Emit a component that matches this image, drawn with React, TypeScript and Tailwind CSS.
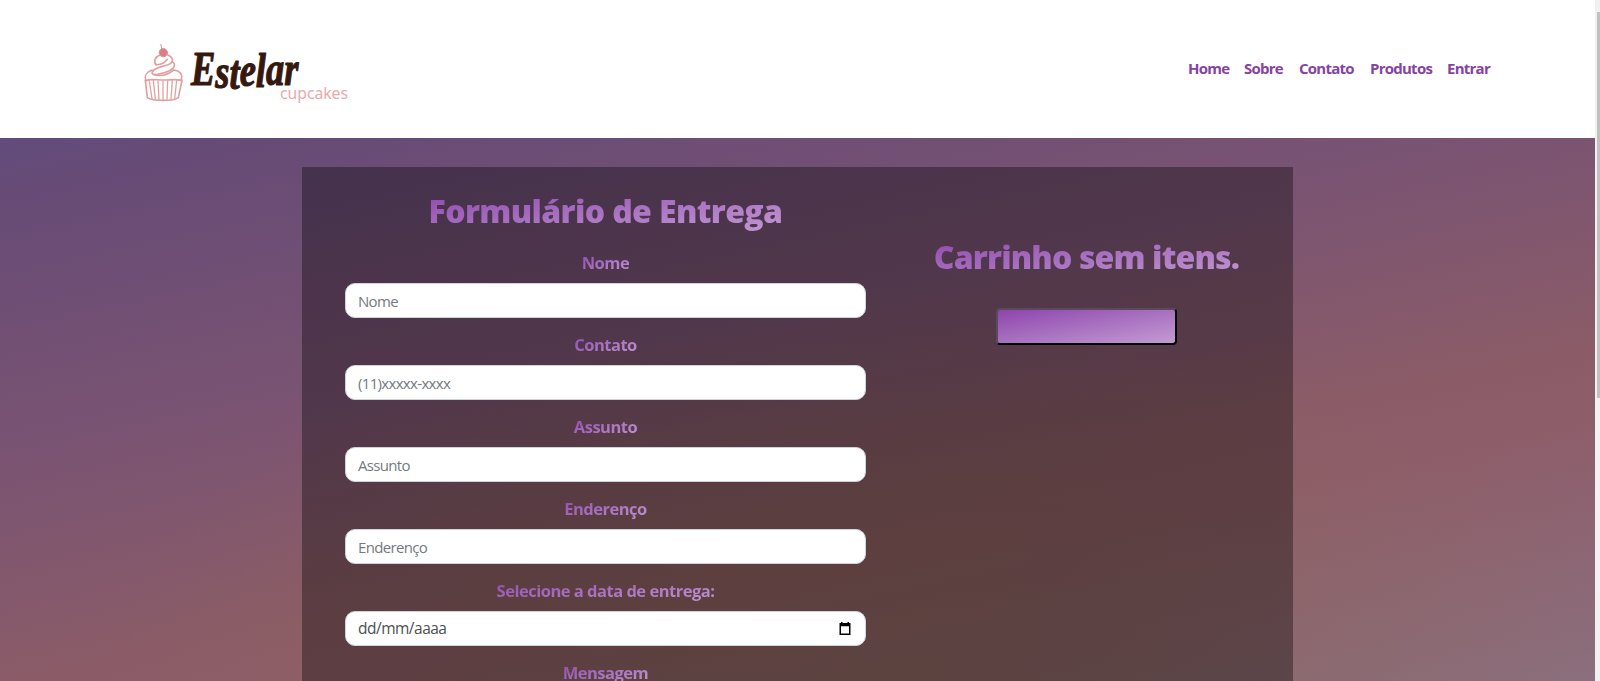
function Logo() {
  return (
    <svg width="240" height="90" viewBox="0 0 240 90" className="block" role="img" aria-label="Estelar cupcakes">
      <g transform="translate(10 10) scale(.3333)" fill="none" stroke="#e0a0a0" strokeWidth="5" strokeLinecap="round" strokeLinejoin="round">
        <path d="M66 26C62 22 66 17 62 14" strokeWidth="3.5" />
        <circle cx="70" cy="38" r="12.5" fill="#d98086" stroke="#dc8d92" strokeWidth="3" />
        <path d="M58 46C44 52 40 66 48 74M82 44C98 50 102 62 92 70C78 80 46 80 38 94" />
        <path d="M48 74C60 75 74 69 82 58M38 94C32 102 42 106 56 102C78 98 100 90 103 78C105 72 101 67 96 66" />
        <path d="M36 90C20 96 12 108 17 122C30 116 50 120 68 120C88 121 106 116 123 121C130 104 120 92 102 90C86 104 62 110 42 104" />
        <path d="M16 122L22 173C38 184 100 184 115 173L126 121" />
        <path d="M28 123L36 176M40 122L46 178M54 123L57 180M69 123L69 180M83 123L81 180M97 122L93 178M110 121L104 176" strokeWidth="3.8" />
      </g>
      <text
        transform="translate(61 0) scale(.76 1)"
        x="0"
        y="55"
        dy="0 3 1 -3 1 -2 0"
        fill="#35190f"
        stroke="#35190f"
        strokeWidth="1.2"
        strokeLinejoin="round"
        fontFamily="'Liberation Serif', serif"
        fontStyle="italic"
        fontWeight="700"
        fontSize="48"
      >
        Estelar
      </text>
      <text x="150" y="69" fill="#e8a9ad" fontFamily="'Noto Sans', sans-serif" fontSize="16.5" textLength="68" lengthAdjust="spacingAndGlyphs">cupcakes</text>
    </svg>
  );
}

const nav = [
  { label: "Home", width: "w-[41px]" },
  { label: "Sobre", width: "w-[40px]" },
  { label: "Contato", width: "w-[56px]" },
  { label: "Produtos", width: "w-[62px]" },
  { label: "Entrar", width: "w-[43px]" },
];

const gradientText = "bg-linear-to-br from-[#8e44ad] to-[#c39bd3] bg-clip-text text-transparent";

function Field({ label, placeholder, date = false }: { label: string; placeholder: string; date?: boolean }) {
  return (
    <div className="mb-3 flex flex-col items-center">
      <label className={`mb-[6px] h-[29px] pt-px text-[16.5px] leading-7 font-bold tracking-[-0.5px] whitespace-nowrap ${gradientText}`}>{label}</label>
      <div className="flex h-[35px] w-full items-center justify-between rounded-[10px] border border-[#ced4da] bg-white px-3">
        <span className={date ? "text-[15.5px] tracking-[-0.5px] text-[#4a5056]" : "pt-px text-[15px] tracking-[-0.67px] text-[#737a81]"}>{placeholder}</span>
        {date && (
          <svg width="12" height="13" viewBox="0 0 12 13" className="mr-[2px]">
            <path fill="#000" fillRule="evenodd" d="M2 0h1.5v1h5V0H10v1h1.5v12H.5V1H2zM2 4.2v7.3h8V4.2z" />
          </svg>
        )}
      </div>
    </div>
  );
}

export default function App() {
  return (
    <div className="flex h-[681px] w-full overflow-hidden bg-white font-['Open_Sans','Noto_Sans',sans-serif] text-base">
      <div className="flex w-[1595px] flex-col">
        <header className="flex h-[138px] shrink-0 items-start justify-between pr-[105px] pl-[130px]">
          <div className="pt-[30px]">
            <Logo />
          </div>
          <nav className="flex gap-[15px] pt-[56px] text-[15px] leading-6 font-bold tracking-[-0.75px] text-[#8743a2]">
            {nav.map((n) => (
              <a key={n.label} className={`whitespace-nowrap ${n.width}`}>{n.label}</a>
            ))}
          </nav>
        </header>
        <main className="flex min-h-0 flex-1 items-start justify-center bg-[radial-gradient(ellipse_800px_360px_at_56%_100%,rgba(139,105,70,.4),transparent),linear-gradient(168deg,#624c7c_0%,#674b76_7%,#7b5472_38%,#8b5c68_62%,#8e5d6a_70%,#8b6f80_100%)] pt-[29px]">
          <section className="flex h-[700px] w-[991px] bg-black/34 pl-[43px]">
            <div className="w-[521px] pt-[20px]">
              <div className="flex justify-center">
                <h1 className={`h-[48px] text-[32px] leading-[48px] font-extrabold tracking-[-0.63px] whitespace-nowrap ${gradientText}`}>Formulário de Entrega</h1>
              </div>
              <div className="pt-[13px]">
                <Field label="Nome" placeholder="Nome" />
                <Field label="Contato" placeholder="(11)xxxxx-xxxx" />
                <Field label="Assunto" placeholder="Assunto" />
                <Field label="Enderenço" placeholder="Enderenço" />
                <Field label="Selecione a data de entrega:" placeholder="dd/mm/aaaa" date />
                <Field label="Mensagem" placeholder="" />
              </div>
            </div>
            <div className="flex flex-1 flex-col items-center pt-[66px] pl-[14px]">
              <h2 className={`h-[48px] text-[32px] leading-[48px] font-extrabold tracking-[-0.85px] whitespace-nowrap ${gradientText}`}>Carrinho sem itens.</h2>
              <button aria-label="Carrinho" className="mt-[27px] h-[37px] w-[181px] rounded-[4px] border-2 border-t-[#5b4a5c] border-r-black border-b-black border-l-[#5b4a5c] bg-linear-to-br from-[#8e44ad] to-[#c39bd3]" />
            </div>
          </section>
        </main>
      </div>
      <div className="flex w-[5px] flex-col bg-[#f1f1f1] pt-[12px] pl-[2px]">
        <div className="h-[386px] bg-[#c1c1c1]" />
      </div>
    </div>
  );
}
